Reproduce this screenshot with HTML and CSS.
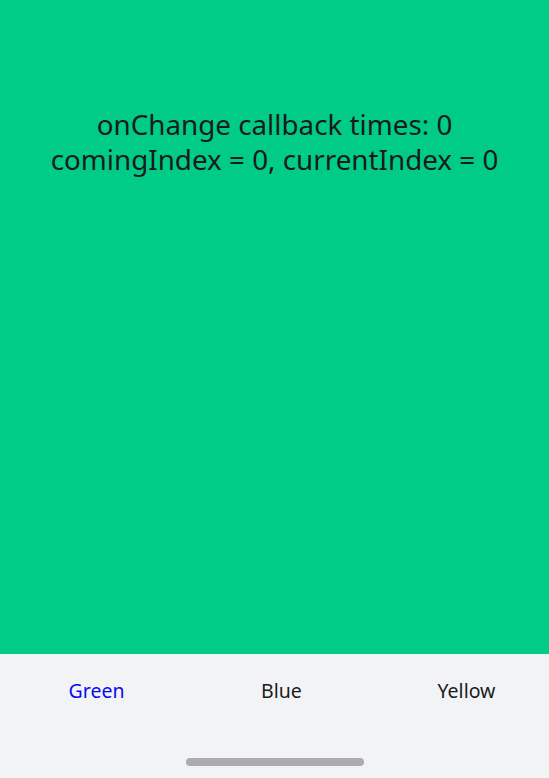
FILE: index.html
```html
<!DOCTYPE html>
<html>
<head>
<meta charset="utf-8">
<link rel="stylesheet" href="styles.css">
</head>
<body>
<div class="screen">
  <div class="swiper">
    <div class="info">
      <div class="line">onChange callback times: 0</div>
      <div class="line">comingIndex = 0, currentIndex = 0</div>
    </div>
  </div>
  <div class="tabbar">
    <div class="tab active">Green</div>
    <div class="tab">Blue</div>
    <div class="tab">Yellow</div>
  </div>
  <div class="home">
    <div class="indicator"></div>
  </div>
</div>
</body>
</html>
```

FILE: styles.css
```css
html, body {
  margin: 0;
  padding: 0;
}
body {
  width: 549px;
  height: 778px;
  overflow: hidden;
  font-family: "Noto Sans", sans-serif;
  color: #1b1b1b;
}
.screen {
  display: flex;
  flex-direction: column;
  height: 778px;
}
.swiper {
  height: 654px;
  background: #00cc88;
  display: flex;
  flex-direction: column;
  align-items: center;
}
.info {
  margin-top: 107px;
  text-align: center;
  font-size: 27.8px;
  line-height: 35px;
}
.tabbar {
  background: #f2f3f5;
  display: grid;
  grid-template-columns: repeat(3, 185px);
  padding-left: 4px;
  height: 72px;
  align-items: center;
  overflow: hidden;
}
.tab {
  text-align: center;
  font-size: 19.5px;
  color: #1b1b1b;
}
.tab.active {
  color: #0a0af0;
}
.home {
  flex: 1;
  background: #f2f3f5;
  display: flex;
  justify-content: center;
  padding-top: 32px;
}
.indicator {
  width: 178px;
  height: 8px;
  border-radius: 4px;
  background: #acacae;
}
```
